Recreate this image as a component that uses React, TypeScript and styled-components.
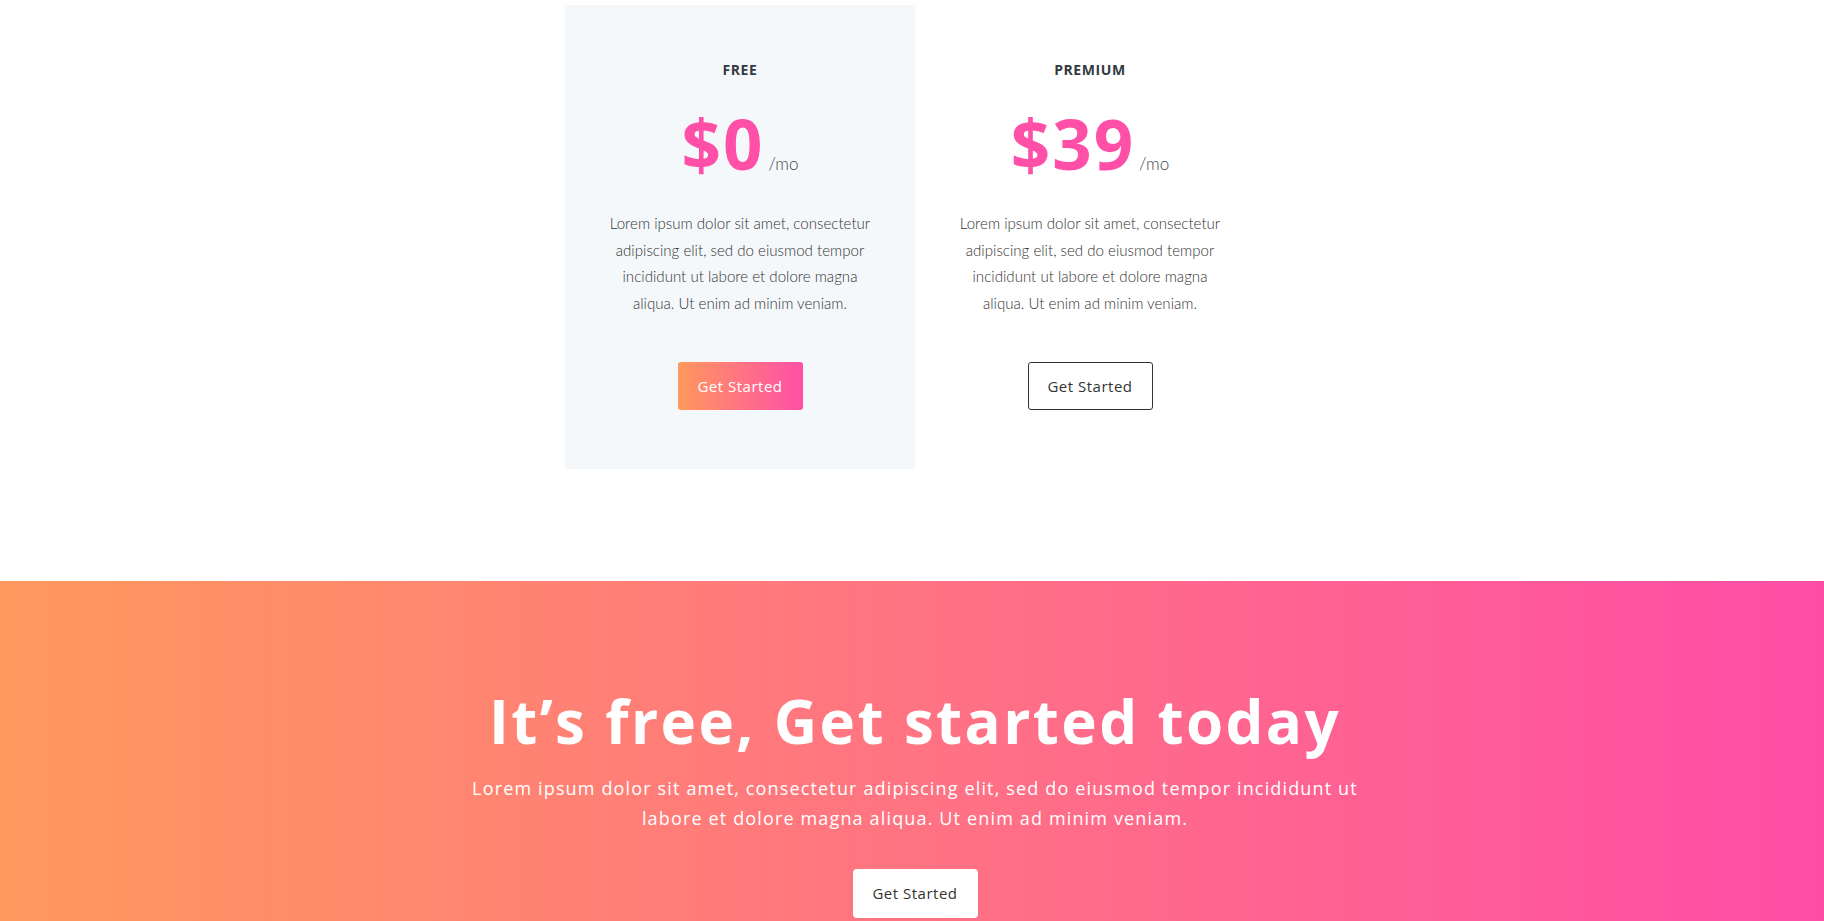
import React from 'react';
import styled, { createGlobalStyle } from 'styled-components';

// Datos de los planes
interface Plan {
  name: string;
  price: string;
  highlight?: boolean;
}

const plans: Plan[] = [
  { name: 'FREE', price: '$0', highlight: true },
  { name: 'PREMIUM', price: '$39' },
];

const lorem =
  'Lorem ipsum dolor sit amet, consectetur adipiscing elit, sed do eiusmod tempor incididunt ut labore et dolore magna aliqua. Ut enim ad minim veniam.';

// Líneas del texto de las tarjetas, tal como se cortan en el diseño
const cardLines = [
  'Lorem ipsum dolor sit amet, consectetur',
  'adipiscing elit, sed do eiusmod tempor',
  'incididunt ut labore et dolore magna',
  'aliqua. Ut enim ad minim veniam.',
];

const App: React.FC = () => {
  return (
    <>
      <GlobalStyle />
      <PricingSection>
        {plans.map((plan) => (
          <PlanCard key={plan.name} $highlight={plan.highlight}>
            <PlanName>{plan.name}</PlanName>
            <Price>
              <Amount>{plan.price}</Amount>
              <Period>/mo</Period>
            </Price>
            <Description>
              {cardLines.map((line) => (
                <Line key={line}>{line}</Line>
              ))}
            </Description>
            <CardButton $filled={plan.highlight}>Get Started</CardButton>
          </PlanCard>
        ))}
      </PricingSection>
      <Banner>
        <BannerTitle>It’s free, Get started today</BannerTitle>
        <BannerText>{lorem}</BannerText>
        <BannerButton>Get Started</BannerButton>
      </Banner>
    </>
  );
};

const GlobalStyle = createGlobalStyle`
  body {
    margin: 0;
    background: #fff;
    font-family: 'Open Sans', sans-serif;
  }
`;

const PricingSection = styled.section`
  display: flex;
  justify-content: center;
  padding: 5px 0 112px 6px;
`;

const PlanCard = styled.div<{ $highlight?: boolean }>`
  width: 350px;
  box-sizing: border-box;
  padding: 56px 0 59px;
  display: flex;
  flex-direction: column;
  align-items: center;
  text-align: center;
  background-color: ${({ $highlight }) => ($highlight ? '#f5f8fb' : 'transparent')};
`;

const PlanName = styled.h4`
  margin: 0;
  font-family: 'Open Sans', sans-serif;
  font-size: 14px;
  line-height: 17px;
  font-weight: 700;
  color: #343a40;
  letter-spacing: 0.6px;
`;

const Price = styled.div`
  margin-top: 31px;
  display: flex;
  align-items: baseline;
  justify-content: center;
`;

const Amount = styled.span`
  font-family: 'Open Sans', sans-serif;
  font-size: 69px;
  line-height: 1;
  font-weight: 700;
  color: #ff4fa7;
  letter-spacing: 2px;
`;

const Period = styled.span`
  margin-left: 4px;
  font-family: Lato, sans-serif;
  font-size: 17px;
  font-weight: 300;
  color: #444;
`;

const Description = styled.p`
  margin: 32px 0 0;
  font-family: Lato, sans-serif;
  font-size: 15.1px;
  font-weight: 300;
  line-height: 26.7px;
  color: #333;
  white-space: nowrap;
`;

const Line = styled.span`
  display: block;
`;

const CardButton = styled.button<{ $filled?: boolean }>`
  margin-top: 45px;
  width: 125px;
  height: 48px;
  border-radius: 3px;
  cursor: pointer;
  font-family: 'Open Sans', sans-serif;
  font-size: 15px;
  letter-spacing: 0.5px;
  color: ${({ $filled }) => ($filled ? '#fff' : '#333')};
  border: ${({ $filled }) => ($filled ? 'none' : '1px solid #333')};
  background: ${({ $filled }) =>
    $filled ? 'linear-gradient(to right, #ff995d, #ff4fa7)' : 'transparent'};
`;

const Banner = styled.section`
  display: flex;
  flex-direction: column;
  align-items: center;
  text-align: center;
  padding: 104px 20px 80px 26px;
  background: linear-gradient(to right, #ff995d, #ff4da7);
  color: #fff;
`;

const BannerTitle = styled.h1`
  margin: 0;
  font-family: 'Open Sans', sans-serif;
  font-size: 60px;
  line-height: 72px;
  font-weight: 700;
  letter-spacing: 2.4px;
`;

const BannerText = styled.p`
  margin: 16px 0 0;
  max-width: 910px;
  font-family: 'Open Sans', sans-serif;
  font-size: 18px;
  line-height: 30px;
  letter-spacing: 1.15px;
`;

const BannerButton = styled.button`
  margin-top: 36px;
  width: 125px;
  height: 49px;
  border: none;
  border-radius: 4px;
  background: #fff;
  cursor: pointer;
  font-family: 'Open Sans', sans-serif;
  font-size: 15px;
  letter-spacing: 0.5px;
  color: #333;
`;

export default App;
